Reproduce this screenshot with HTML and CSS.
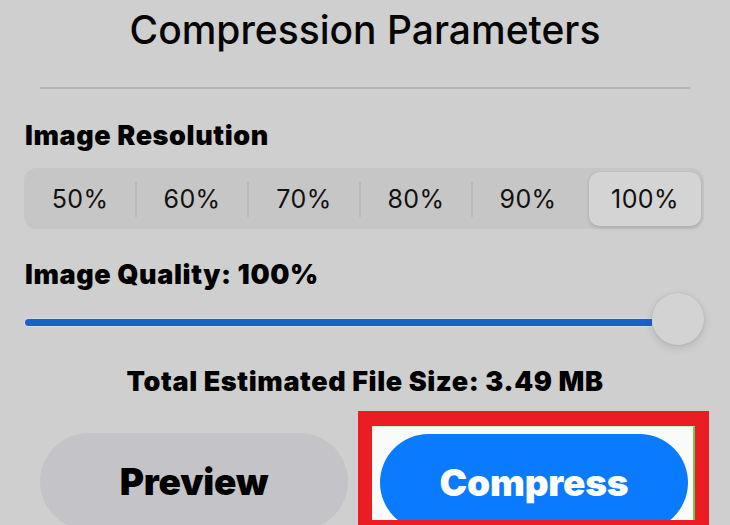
FILE: index.html
```html
<!DOCTYPE html>
<html lang="en">
<head>
<meta charset="utf-8">
<title>Compression Parameters</title>
<link rel="stylesheet" href="styles.css">
</head>
<body>
<main class="sheet">
  <h1 class="title">Compression Parameters</h1>
  <hr class="divider">

  <h2 class="label label-resolution">Image Resolution</h2>
  <div class="segmented">
    <div class="seg">50%</div>
    <div class="seg">60%</div>
    <div class="seg">70%</div>
    <div class="seg">80%</div>
    <div class="seg">90%</div>
    <div class="seg seg-active">100%</div>
  </div>

  <h2 class="label label-quality">Image Quality: 100%</h2>
  <div class="slider">
    <div class="track"></div>
    <div class="thumb"></div>
  </div>

  <p class="estimate">Total Estimated File Size: 3.49 MB</p>

  <div class="actions">
    <button class="btn btn-preview">Preview</button>
    <div class="highlight">
      <div class="highlight-inner">
        <button class="btn btn-compress">Compress</button>
      </div>
    </div>
  </div>
</main>
</body>
</html>
```
FILE: styles.css
```css
html, body {
  margin: 0;
  padding: 0;
}
body {
  width: 730px;
  height: 525px;
  overflow: hidden;
  background: #cfcfcf;
  font-family: Inter, "Noto Sans", "Liberation Sans", sans-serif;
  color: #000;
}
.sheet {
  display: flex;
  flex-direction: column;
  height: 525px;
}
.title {
  margin: 5px 0 0;
  height: 50px;
  line-height: 50px;
  font-size: 39px;
  font-weight: 500;
  text-align: center;
  letter-spacing: 0;
  color: #050505;
}
.divider {
  margin: 32px 40px 0;
  border: 0;
  height: 2px;
  background: #b6b6b6;
}
.label {
  margin: 0 0 0 25px;
  font-size: 27px;
  line-height: 30px;
  height: 30px;
  font-weight: 900;
  letter-spacing: 0.6px;
  white-space: nowrap;
}
.label-resolution {
  margin-top: 32px;
}
.segmented {
  margin: 17px 26px 0 24px;
  height: 61px;
  box-sizing: border-box;
  background: #c6c6c6;
  border-radius: 13px;
  display: flex;
}
.seg {
  flex: 1 1 0;
  display: flex;
  align-items: center;
  justify-content: center;
  font-size: 25px;
  font-weight: 400;
  letter-spacing: 0.4px;
  color: #111;
  position: relative;
}
.seg + .seg::before {
  content: "";
  position: absolute;
  left: -1px;
  top: 14px;
  bottom: 12px;
  width: 2px;
  background: #b9b9b9;
}
.seg-active {
  margin: 4px 3px 3px 5px;
  background: #d4d4d4;
  border-radius: 10px;
  box-shadow: 0 2px 4px rgba(0, 0, 0, 0.12), 0 0 1px rgba(0, 0, 0, 0.15);
}
.seg-active::before,
.seg-active + .seg::before {
  display: none;
}
.label-quality {
  margin-top: 31px;
}
.slider {
  margin: 3px 26px 0 25px;
  height: 52px;
  display: flex;
  align-items: center;
}
.track {
  flex: 1;
  height: 7px;
  margin-top: 6px;
  background: #1a62c9;
  border-radius: 4px 0 0 4px;
  box-shadow: 0 0 0 1px rgba(220, 230, 255, 0.5);
}
.thumb {
  width: 52px;
  height: 52px;
  border-radius: 50%;
  background: #d3d3d3;
  box-shadow: 0 3px 8px rgba(0, 0, 0, 0.13), 0 0 2px rgba(0, 0, 0, 0.1);
}
.estimate {
  margin: 22px 0 0;
  height: 30px;
  line-height: 30px;
  font-size: 27px;
  font-weight: 900;
  text-align: center;
  letter-spacing: 0.6px;
  white-space: nowrap;
}
.actions {
  margin-top: 14px;
  padding-left: 40px;
  display: flex;
  align-items: flex-start;
  gap: 10px;
  flex: 1;
  min-height: 0;
}
.btn {
  border: 0;
  font-family: inherit;
  font-size: 37px;
  font-weight: 900;
  height: 97px;
  border-radius: 49px;
  padding: 0;
  letter-spacing: -0.2px;
}
.btn-preview {
  width: 308px;
  margin-top: 22px;
  background: #c4c4c8;
  color: #000;
}
.highlight {
  width: 351px;
  height: 115px;
  box-sizing: border-box;
  border: 14px solid #ec1c24;
  border-top-width: 15px;
  border-bottom-width: 6px;
  overflow: hidden;
}
.highlight-inner {
  height: 100%;
  box-sizing: border-box;
  background: #f8fbf7;
  border-top: 1px solid #c9efc0;
  border-right: 2px solid #5fd44a;
  padding: 7px 5px 0 8px;
  overflow: hidden;
}
.btn-compress {
  width: 308px;
  background: #0a7aff;
  color: #fff;
}
```
